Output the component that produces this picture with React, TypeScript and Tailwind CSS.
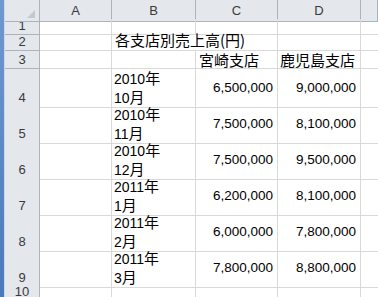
import React from "react";

const data = [
  { n: "4", y: "2010", m: "10", c: "6,500,000", d: "9,000,000" },
  { n: "5", y: "2010", m: "11", c: "7,500,000", d: "8,100,000" },
  { n: "6", y: "2010", m: "12", c: "7,500,000", d: "9,500,000" },
  { n: "7", y: "2011", m: "1", c: "6,200,000", d: "8,100,000" },
  { n: "8", y: "2011", m: "2", c: "6,000,000", d: "7,800,000" },
  { n: "9", y: "2011", m: "3", c: "7,800,000", d: "8,800,000" },
];

const font = "font-['Liberation_Sans','Noto_Sans_CJK_JP',sans-serif]";
const grid = "grid grid-cols-[35px_72px_84px_82px_83px_1fr]";
const cell = "border-r border-b border-[#d9d9d9]";
const rowHead =
  "flex items-end justify-center bg-[#e4e7ec] border-r border-b border-[#abb3be] text-[13px] leading-[14px] text-[#3a3a3a] pb-[1px]";

function J({ children }: { children: React.ReactNode }) {
  return <span className="text-[15px] font-['Noto_Sans_CJK_JP',sans-serif]">{children}</span>;
}

export default function App() {
  return (
    <div className={`flex w-[378px] h-[297px] overflow-hidden bg-white text-black ${font}`}>
      {/* window edge */}
      <div className="w-[4px] bg-gradient-to-b from-[#7098d2] to-[#4c79bd]" />
      <div className="w-[1px] bg-[#cfd7e2]" />

      <div className="flex-1 flex flex-col min-w-0">
        <div className="h-[1px] bg-[#8e99a8]" />

        {/* column headers */}
        <div className={`${grid} h-[19px] text-[13px] text-[#3a3a3a]`}>
          <div className="relative bg-[#e4e7ec] border-r border-b border-[#abb3be]">
            <div className="absolute right-[4px] bottom-[3px] w-0 h-0 border-l-[8px] border-l-transparent border-b-[8px] border-b-[#c3c9d1]" />
          </div>
          {["A", "B", "C", "D", ""].map((l, i) => (
            <div
              key={i}
              className="flex items-center justify-center bg-[#e4e7ec] border-r border-b border-[#abb3be] pt-[1px]"
            >
              {l}
            </div>
          ))}
        </div>

        {/* row 1 */}
        <div className={`${grid} h-[17px]`}>
          <div className={rowHead}>1</div>
          <div className={cell} />
          <div className={cell} />
          <div className={cell} />
          <div className={cell} />
          <div className="border-b border-[#d9d9d9]" />
        </div>

        {/* row 2 */}
        <div className={`${grid} h-[19px]`}>
          <div className={rowHead}>2</div>
          <div className={cell} />
          <div className="relative border-b border-[#d9d9d9]">
            <div className="absolute left-[3px] bottom-[0px] whitespace-nowrap leading-[18px] z-10">
              <J>各支店別売上高(円)</J>
            </div>
          </div>
          <div className={cell} />
          <div className={cell} />
          <div className="border-b border-[#d9d9d9]" />
        </div>

        {/* row 3 */}
        <div className={`${grid} h-[18px]`}>
          <div className={rowHead}>3</div>
          <div className={cell} />
          <div className={cell} />
          <div className={`${cell} flex items-end pl-[3px] leading-[17px] whitespace-nowrap`}>
            <J>宮崎支店</J>
          </div>
          <div className={`${cell} flex items-end pl-[2px] leading-[17px] whitespace-nowrap`}>
            <J>鹿児島支店</J>
          </div>
          <div className="border-b border-[#d9d9d9]" />
        </div>

        {/* data rows */}
        {data.map((r) => (
          <div key={r.n} className={`${grid} h-[36px]`}>
            <div className={`${rowHead} pb-[2px]`}>{r.n}</div>
            <div className={cell} />
            <div className={`${cell} flex flex-col justify-center pl-[2px] text-[14px] leading-[18px]`}>
              <div>
                {r.y}
                <J>年</J>
              </div>
              <div>
                {r.m}
                <J>月</J>
              </div>
            </div>
            <div className={`${cell} flex items-center justify-end pr-[4px] text-[13.5px]`}>{r.c}</div>
            <div className={`${cell} flex items-center justify-end pr-[4px] text-[13.5px]`}>{r.d}</div>
            <div className="border-b border-[#d9d9d9]" />
          </div>
        ))}

        {/* row 10 */}
        <div className={`${grid} flex-1`}>
          <div className={rowHead}>10</div>
          <div className={cell} />
          <div className={cell} />
          <div className={cell} />
          <div className={cell} />
          <div />
        </div>
      </div>
    </div>
  );
}
